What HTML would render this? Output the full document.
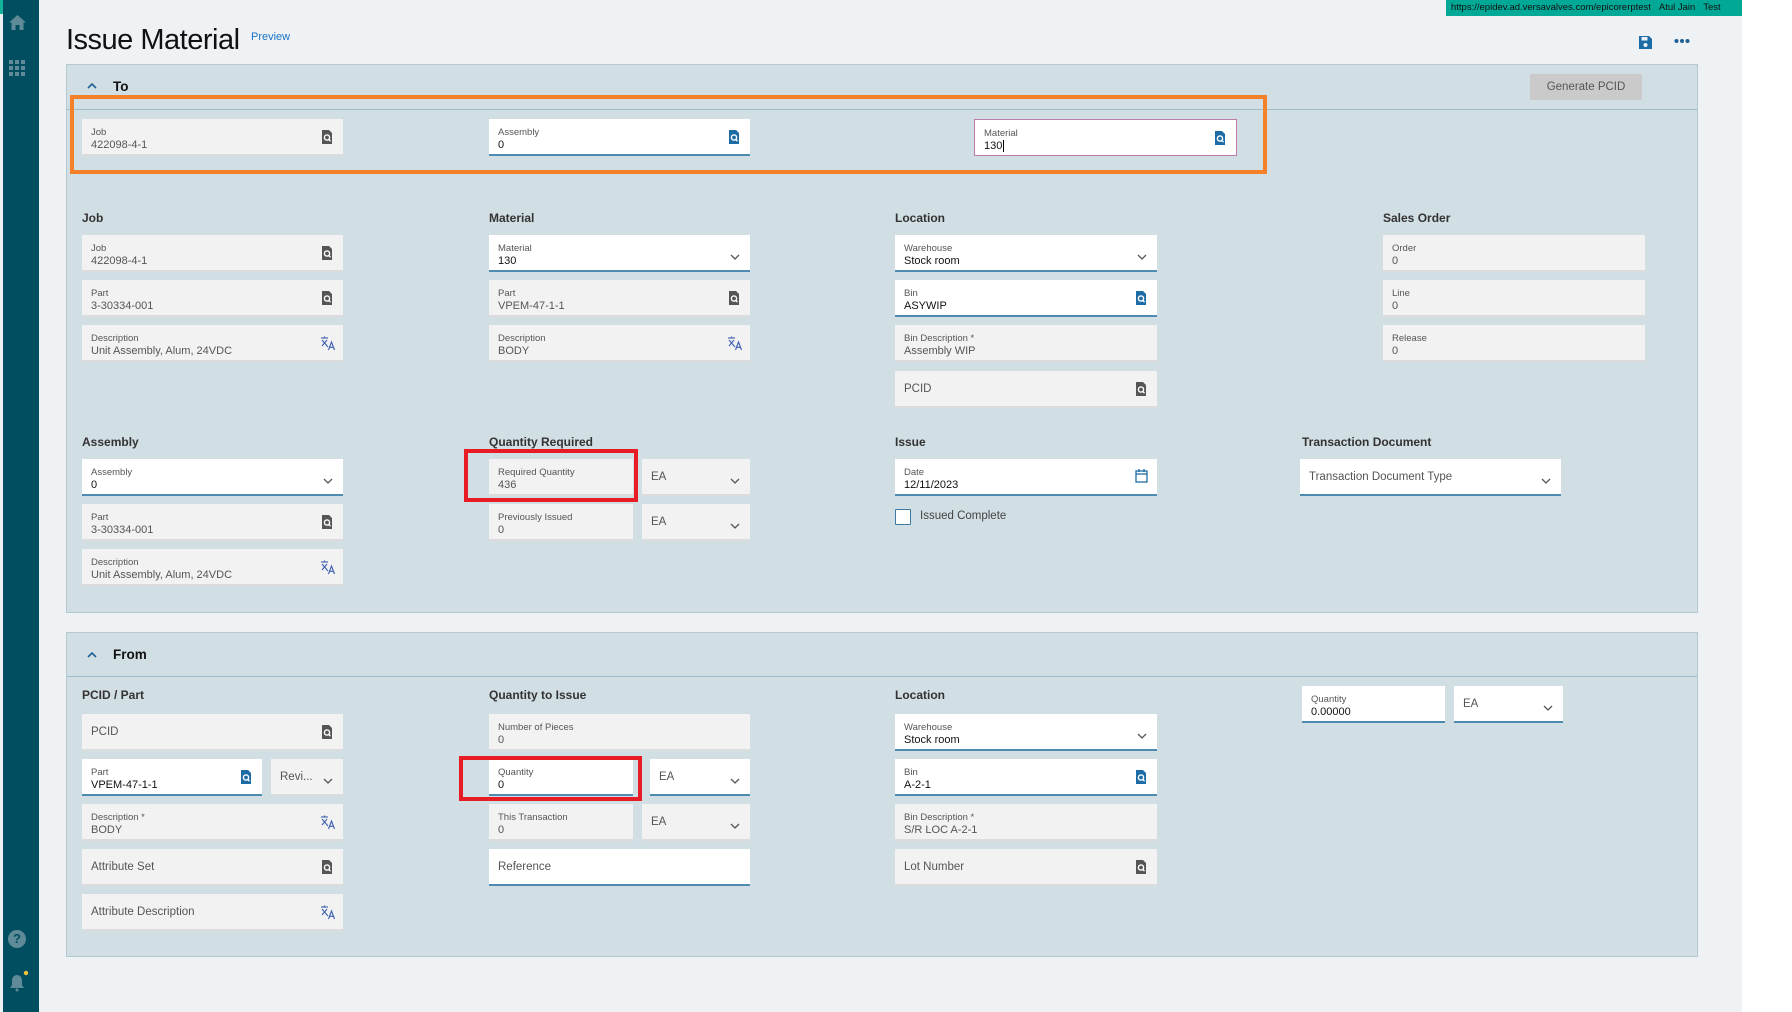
<!DOCTYPE html>
<html><head><meta charset="utf-8"><style>
*{box-sizing:border-box;margin:0;padding:0}
body{width:1792px;height:1012px;overflow:hidden;background:#eef2f5;font-family:"Liberation Sans",sans-serif;position:relative;color:#222}
.a{position:absolute}
.side{left:3px;top:0;width:36px;height:1012px;background:#004e60}
.panel{background:#d1dee3;border:1px solid #b7c9d0}
.hl{height:1px;background:#9dbdca}
.h{font-size:12px;font-weight:bold;color:#333}
.f{position:absolute;height:37px;background:#f2f2f2;border-bottom:2px solid #dcdcdc}
.f.w{background:#fff;border-bottom:2px solid #4f8bb0}
.f .l{position:absolute;left:9px;top:8px;font-size:9.5px;color:#555}
.f .v{position:absolute;left:9px;top:20px;font-size:11px;color:#555}
.f.w .v{color:#111}
.f .p{position:absolute;left:9px;top:12px;font-size:11.5px;color:#555}
.f.w .p{color:#555}
.ic{position:absolute;right:10px;top:11px}
.ch{position:absolute;right:10px;top:13px}
</style></head><body>
<div class="a" style="left:0;top:0;width:3px;height:14px;background:#12b39a"></div>
<div class="a side"></div>
<svg class="a" style="left:8px;top:14px" width="19" height="17" viewBox="0 0 19 17"><path d="M9.5 1 L18 8.5 H15.5 V16 H11.5 V11 H7.5 V16 H3.5 V8.5 H1 Z" fill="#5f8a97"/></svg>
<svg class="a" style="left:9px;top:60px" width="16" height="16"><g fill="#5f8a97"><rect x="0" y="0" width="4" height="4"/><rect x="6" y="0" width="4" height="4"/><rect x="12" y="0" width="4" height="4"/><rect x="0" y="6" width="4" height="4"/><rect x="6" y="6" width="4" height="4"/><rect x="12" y="6" width="4" height="4"/><rect x="0" y="12" width="4" height="4"/><rect x="6" y="12" width="4" height="4"/><rect x="12" y="12" width="4" height="4"/></g></svg>
<div class="a" style="left:8px;top:930px;width:18px;height:18px;border-radius:50%;background:#5f8a97;color:#004e60;font-size:13px;font-weight:bold;text-align:center;line-height:18px">?</div>
<svg class="a" style="left:8px;top:970px" width="22" height="22"><path d="M2 18 H16 L14 15 V10 A5 5 0 0 0 4 10 V15 Z" fill="#5f8a97"/><circle cx="9" cy="20" r="1.5" fill="#5f8a97"/><circle cx="18" cy="3" r="2.2" fill="#f2c23a"/></svg>

<div class="a" style="left:1446px;top:0;width:296px;height:16px;background:#00a896;font-size:9.5px;color:#111;line-height:16px;padding-left:5px;white-space:nowrap;overflow:hidden">https://epidev.ad.versavalves.com/epicorerptest&nbsp;&nbsp;&nbsp;Atul Jain&nbsp;&nbsp;&nbsp;Test</div>
<div class="a" style="left:1742px;top:0;width:50px;height:1012px;background:#fff"></div>

<div class="a" style="left:66px;top:24px;font-size:29px;color:#111;letter-spacing:-0.5px">Issue Material</div>
<div class="a" style="left:251px;top:31px;font-size:11px;color:#1a73c8">Preview</div>
<svg class="a" style="left:1638px;top:35px" width="15" height="15" viewBox="0 0 15 15"><path d="M1 1 H11 L14 4 V14 H1 Z" fill="#1e6ca6"/><rect x="3.5" y="2" width="6" height="3.5" fill="#eef2f5"/><circle cx="7.5" cy="10" r="2" fill="#eef2f5"/></svg>
<svg class="a" style="left:1674px;top:38px" width="16" height="6"><circle cx="2.5" cy="3" r="2" fill="#1e5f95"/><circle cx="8" cy="3" r="2" fill="#1e5f95"/><circle cx="13.5" cy="3" r="2" fill="#1e5f95"/></svg>

<!-- TO panel -->
<div class="a panel" style="left:66px;top:64px;width:1632px;height:549px"></div>
<div class="a hl" style="left:67px;top:109px;width:1630px"></div>
<svg class="a" style="left:87px;top:82px" width="10" height="7"><polyline points="1,6 5,2 9,6" fill="none" stroke="#1e5f95" stroke-width="1.6"/></svg>
<div class="a" style="left:113px;top:79px;font-size:13.5px;font-weight:bold;color:#111">To</div>
<div class="a" style="left:1530px;top:74px;width:112px;height:26px;background:#cacaca;border-radius:2px;font-size:11.5px;color:#555;text-align:center;line-height:26px">Generate PCID</div>
<div class="a" style="left:70px;top:95px;width:1197px;height:79px;border:4px solid #f5802a"></div>

<div class="a h" style="left:82px;top:211px">Job</div>
<div class="a h" style="left:489px;top:211px">Material</div>
<div class="a h" style="left:895px;top:211px">Location</div>
<div class="a h" style="left:1383px;top:211px">Sales Order</div>
<div class="a h" style="left:82px;top:435px">Assembly</div>
<div class="a h" style="left:489px;top:435px">Quantity Required</div>
<div class="a h" style="left:895px;top:435px">Issue</div>
<div class="a h" style="left:1302px;top:435px">Transaction Document</div>

<!-- FROM panel -->
<div class="a panel" style="left:66px;top:632px;width:1632px;height:325px"></div>
<div class="a hl" style="left:67px;top:676px;width:1630px"></div>
<svg class="a" style="left:87px;top:651px" width="10" height="7"><polyline points="1,6 5,2 9,6" fill="none" stroke="#1e5f95" stroke-width="1.6"/></svg>
<div class="a" style="left:113px;top:647px;font-size:13.5px;font-weight:bold;color:#111">From</div>
<div class="a h" style="left:82px;top:688px">PCID / Part</div>
<div class="a h" style="left:489px;top:688px">Quantity to Issue</div>
<div class="a h" style="left:895px;top:688px">Location</div>

<div id="fields"></div>

<div class="a" style="left:895px;top:509px;width:16px;height:16px;border:1.5px solid #3f7aa3;background:#fff;border-radius:1px"></div>
<div class="a" style="left:920px;top:510px;font-size:11.5px;color:#444">Issued Complete</div>

<div class="a" style="left:464px;top:449px;width:174px;height:53px;border:4px solid #e81c24"></div>
<div class="a" style="left:459px;top:756px;width:183px;height:45px;border:4px solid #e81c24"></div>

<script>
var S='<svg width="12" height="14" viewBox="0 0 12 14"><path d="M1 0 H8 L11 3 V14 H1 Z" fill="C"/><circle cx="6" cy="7.5" r="2.6" fill="none" stroke="#fff" stroke-width="1.4"/><line x1="7.8" y1="9.4" x2="9.5" y2="11.2" stroke="#fff" stroke-width="1.4"/></svg>';
var T='<svg width="16" height="15" viewBox="0 0 16 15"><g fill="none" stroke="#3b5fb0" stroke-width="1.1"><line x1="1" y1="2" x2="8" y2="2"/><line x1="4.5" y1="0.5" x2="4.5" y2="2"/><path d="M2 4 L8 11 M7 4 L2 10"/><path d="M8.5 14 L11.5 6 L14.5 14 M9.6 11.3 H13.4"/></g></svg>';
var C='<svg width="10" height="7"><polyline points="1,1 5,5 9,1" fill="none" stroke="#555" stroke-width="1.3"/></svg>';
function f(x,y,w,lab,val,opt){opt=opt||{};var h='<div class="f'+(opt.w?' w':'')+'" style="left:'+x+'px;top:'+y+'px;width:'+w+'px'+(opt.pink?';border:1px solid #c07aa8;border-bottom:1px solid #c07aa8':'')+'">';
if(val===null)h+='<div class="p">'+lab+'</div>';else h+='<div class="l">'+lab+'</div><div class="v">'+val+'</div>';
if(opt.i=='s')h+='<div class="ic">'+S.replace('C','#555')+'</div>';
if(opt.i=='sb')h+='<div class="ic">'+S.replace('C','#1e6ca6')+'</div>';
if(opt.i=='t')h+='<div class="ic" style="right:7px">'+T+'</div>';
if(opt.i=='c')h+='<div class="ch">'+C+'</div>';
return h+'</div>';}
var o='';
o+=f(82,119,261,'Job','422098-4-1',{i:'s'});
o+=f(489,119,261,'Assembly','0',{w:1,i:'sb'});
o+=f(974,119,263,'Material','130<span style="border-left:1px solid #000;margin-left:1px"></span>',{w:1,i:'sb',pink:1});
var r=[235,280,325,371];
o+=f(82,r[0],261,'Job','422098-4-1',{i:'s'});
o+=f(82,r[1],261,'Part','3-30334-001',{i:'s'});
o+=f(82,r[2],261,'Description','Unit Assembly, Alum, 24VDC',{i:'t'});
o+=f(489,r[0],261,'Material','130',{w:1,i:'c'});
o+=f(489,r[1],261,'Part','VPEM-47-1-1',{i:'s'});
o+=f(489,r[2],261,'Description','BODY',{i:'t'});
o+=f(895,r[0],262,'Warehouse','Stock room',{w:1,i:'c'});
o+=f(895,r[1],262,'Bin','ASYWIP',{w:1,i:'sb'});
o+=f(895,r[2],262,'Bin Description *','Assembly WIP',{});
o+=f(895,r[3],262,'PCID',null,{i:'s'});
o+=f(1383,r[0],262,'Order','0',{});
o+=f(1383,r[1],262,'Line','0',{});
o+=f(1383,r[2],262,'Release','0',{});
var q=[459,504,549];
o+=f(82,q[0],261,'Assembly','0',{w:1,i:'c'});
o+=f(82,q[1],261,'Part','3-30334-001',{i:'s'});
o+=f(82,q[2],261,'Description','Unit Assembly, Alum, 24VDC',{i:'t'});
o+=f(489,q[0],144,'Required Quantity','436',{});
o+=f(642,q[0],108,'EA',null,{i:'c'});
o+=f(489,q[1],144,'Previously Issued','0',{});
o+=f(642,q[1],108,'EA',null,{i:'c'});
o+=f(895,q[0],262,'Date','12/11/2023',{w:1});
o+=f(1300,q[0],261,'Transaction Document Type',null,{w:1,i:'c'});
var b=[714,759,804,849,894];
o+=f(82,b[0],261,'PCID',null,{i:'s'});
o+=f(82,b[1],180,'Part','VPEM-47-1-1',{w:1,i:'sb'});
o+=f(271,b[1],72,'Revi...',null,{i:'c'});
o+=f(82,b[2],261,'Description *','BODY',{i:'t'});
o+=f(82,b[3],261,'Attribute Set',null,{i:'s'});
o+=f(82,b[4],261,'Attribute Description',null,{i:'t'});
o+=f(489,b[0],261,'Number of Pieces','0',{});
o+=f(489,b[1],144,'Quantity','0',{w:1});
o+=f(650,b[1],100,'EA',null,{w:1,i:'c'});
o+=f(489,b[2],144,'This Transaction','0',{});
o+=f(642,b[2],108,'EA',null,{i:'c'});
o+=f(489,b[3],261,'Reference',null,{w:1});
o+=f(895,b[0],262,'Warehouse','Stock room',{w:1,i:'c'});
o+=f(895,b[1],262,'Bin','A-2-1',{w:1,i:'sb'});
o+=f(895,b[2],262,'Bin Description *','S/R LOC A-2-1',{});
o+=f(895,b[3],262,'Lot Number',null,{i:'s'});
o+=f(1302,686,143,'Quantity','0.00000',{w:1});
o+=f(1454,686,109,'EA',null,{w:1,i:'c'});
document.getElementById('fields').innerHTML=o;
</script>
<svg class="a" style="left:1135px;top:469px" width="13" height="14" viewBox="0 0 13 14"><rect x="1" y="2" width="11" height="11" fill="none" stroke="#1e6ca6" stroke-width="1.3"/><line x1="1" y1="5" x2="12" y2="5" stroke="#1e6ca6" stroke-width="1.3"/><line x1="4" y1="0" x2="4" y2="3" stroke="#1e6ca6" stroke-width="1.3"/><line x1="9" y1="0" x2="9" y2="3" stroke="#1e6ca6" stroke-width="1.3"/></svg>
</body></html>
